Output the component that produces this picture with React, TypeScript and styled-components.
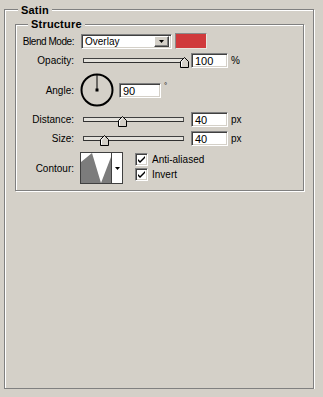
import React from "react";
import styled, { createGlobalStyle } from "styled-components";

const GlobalStyle = createGlobalStyle`
  html, body {
    margin: 0;
    background: #d4d0c8;
  }
  body {
    font-family: "Liberation Sans", Arial, sans-serif;
    font-size: 10px;
    color: #000;
  }
`;

const Group = styled.div<{ $w: number; $h: number; $mt: number; $ml: number }>`
  position: relative;
  box-sizing: border-box;
  width: ${({ $w }) => $w}px;
  height: ${({ $h }) => $h}px;
  margin: ${({ $mt }) => $mt}px 0 0 ${({ $ml }) => $ml}px;
  border: 1px solid #808080;
  box-shadow: inset 1px 1px 0 #fff, 1px 1px 0 #fff;
`;

const Frame = styled.div`
  padding-top: 9px;
  padding-left: 4px;
`;

const Structure = styled(Group)`
  padding-top: 8px;
  display: flex;
  flex-direction: column;
`;

const Title = styled.span<{ $left: number; $top: number }>`
  position: absolute;
  left: ${({ $left }) => $left}px;
  top: ${({ $top }) => $top}px;
  padding: 0 3px;
  background: #d4d0c8;
  font-weight: bold;
  font-size: 11px;
  line-height: 13px;
  letter-spacing: 0.2px;
`;

const Row = styled.div<{ $h: number; $mt: number }>`
  display: flex;
  align-items: center;
  height: ${({ $h }) => $h}px;
  margin-top: ${({ $mt }) => $mt}px;
`;

const Label = styled.span<{ $tight?: boolean }>`
  flex: none;
  width: 58px;
  margin-right: 6px;
  text-align: right;
  white-space: nowrap;
  letter-spacing: ${({ $tight }) => ($tight ? "-0.45px" : "0")};
`;

const sunken = `
  box-sizing: border-box;
  border: 1px solid;
  border-color: #808080 #fff #fff #808080;
  box-shadow: inset 1px 1px 0 #404040, inset -1px -1px 0 #d4d0c8;
  background: #fff;
`;

const Select = styled.div`
  ${sunken}
  display: flex;
  align-items: center;
  width: 91px;
  height: 15px;
  margin-left: 1px;
  padding: 2px;
`;

const SelectText = styled.span`
  flex: 1;
  padding-left: 1px;
  line-height: 11px;
`;

const DropButton = styled.div`
  box-sizing: border-box;
  display: flex;
  align-items: center;
  justify-content: center;
  width: 15px;
  height: 11px;
  background: #d4d0c8;
  border: 1px solid;
  border-color: #fff #404040 #404040 #fff;
  box-shadow: inset -1px -1px 0 #808080;
`;

const Swatch = styled.div`
  box-sizing: border-box;
  width: 32px;
  height: 16px;
  margin-left: 3px;
  background: #d03a3c;
  border: 1px solid #8a8a8a;
  border-color: #8a8a8a #e8e6e0 #e8e6e0 #8a8a8a;
`;

const Slider = styled.div`
  position: relative;
  display: flex;
  align-items: center;
  width: 108px;
  height: 15px;
`;

const Track = styled.div`
  box-sizing: border-box;
  width: 101px;
  height: 5px;
  margin-left: 3px;
  background: #e4e2dc;
  border: 1px solid #404040;
  border-bottom-color: #303030;
  border-right-color: #505050;
`;

const Thumb = styled.svg`
  position: absolute;
  top: 4px;
`;

const NumInput = styled.div<{ $w: number; $ml: number }>`
  ${sunken}
  width: ${({ $w }) => $w}px;
  height: 15px;
  margin-left: ${({ $ml }) => $ml}px;
  padding: 1px 0 0 3px;
  line-height: 12px;
  font-size: 11px;
`;

const Unit = styled.span<{ $raise?: boolean }>`
  margin-left: 3px;
  align-self: ${({ $raise }) => ($raise ? "flex-start" : "center")};
  margin-top: ${({ $raise }) => ($raise ? "8px" : "0")};
  font-size: ${({ $raise }) => ($raise ? "8px" : "10px")};
`;

const Dial = styled.svg`
  flex: none;
`;

const ContourBox = styled.div`
  box-sizing: border-box;
  display: flex;
  width: 43px;
  height: 32px;
  border: 1px solid #404040;
  background: #fff;
`;

const ContourArrow = styled.div`
  display: flex;
  align-items: center;
  justify-content: center;
  width: 10px;
  border-left: 1px solid #404040;
`;

const Checks = styled.div`
  display: flex;
  flex-direction: column;
  gap: 2px;
  align-self: flex-start;
  margin: 1px 0 0 12px;
`;

const CheckRow = styled.label`
  display: flex;
  align-items: center;
  gap: 4px;
  height: 13px;
`;

const Box = styled.span`
  ${sunken}
  display: flex;
  align-items: center;
  justify-content: center;
  width: 13px;
  height: 13px;
`;

const Arrow = () => (
  <svg width="5" height="3" viewBox="0 0 5 3">
    <polygon points="0,0 5,0 2.5,3" fill="#000" />
  </svg>
);

const Check = ({ label }: { label: string }) => (
  <CheckRow>
    <Box>
      <svg width="7" height="7" viewBox="0 0 7 7">
        <path d="M0 3 L0 5 L2 7 L7 2 L7 0 L2 5 Z" fill="#000" />
      </svg>
    </Box>
    {label}
  </CheckRow>
);

const SliderField = ({ value }: { value: number }) => (
  <Slider>
    <Track />
    <Thumb
      width="9"
      height="11"
      viewBox="0 0 9 11"
      style={{ left: Math.round(3 + value * 101 - 4.5) }}
    >
      <polygon
        points="0.5,10.5 0.5,4.5 4.5,0.5 8.5,4.5 8.5,10.5"
        fill="#d4d0c8"
        stroke="#000"
      />
      <path d="M1.5 9.5 V4.9 L4.5 1.9" stroke="#fff" fill="none" />
    </Thumb>
  </Slider>
);

export default function App() {
  return (
    <>
      <GlobalStyle />
      <Frame>
        <Group $w={310} $h={380} $mt={0} $ml={0}>
          <Title $left={13} $top={-6}>Satin</Title>
          <Structure $w={289} $h={167} $mt={14} $ml={10}>
            <Title $left={12} $top={-7}>Structure</Title>

            <Row $h={16} $mt={0}>
              <Label $tight>Blend Mode:</Label>
              <Select>
                <SelectText>Overlay</SelectText>
                <DropButton>
                  <Arrow />
                </DropButton>
              </Select>
              <Swatch />
            </Row>

            <Row $h={15} $mt={4}>
              <Label>Opacity:</Label>
              <SliderField value={1} />
              <NumInput $w={37} $ml={3}>100</NumInput>
              <Unit>%</Unit>
            </Row>

            <Row $h={34} $mt={5}>
              <Label>Angle:</Label>
              <Dial width="34" height="34" viewBox="0 0 34 34">
                <circle cx="17" cy="17" r="15.5" fill="none" stroke="#000" strokeWidth="2" />
                <line x1="17" y1="17" x2="17" y2="2" stroke="#000" strokeWidth="1" />
                <rect x="15.5" y="15.5" width="3" height="3" fill="#000" />
              </Dial>
              <NumInput $w={42} $ml={5}>90</NumInput>
              <Unit $raise>°</Unit>
            </Row>

            <Row $h={15} $mt={5}>
              <Label>Distance:</Label>
              <SliderField value={0.39} />
              <NumInput $w={37} $ml={3}>40</NumInput>
              <Unit>px</Unit>
            </Row>

            <Row $h={15} $mt={4}>
              <Label>Size:</Label>
              <SliderField value={0.21} />
              <NumInput $w={37} $ml={3}>40</NumInput>
              <Unit>px</Unit>
            </Row>

            <Row $h={32} $mt={6}>
              <Label>Contour:</Label>
              <ContourBox>
                <svg width="30" height="30" viewBox="0 0 30 30">
                  <polygon points="0,30 0,9 11,0 20,30 30,4 30,30" fill="#7c7c7c" />
                </svg>
                <ContourArrow>
                  <Arrow />
                </ContourArrow>
              </ContourBox>
              <Checks>
                <Check label="Anti-aliased" />
                <Check label="Invert" />
              </Checks>
            </Row>
          </Structure>
        </Group>
      </Frame>
    </>
  );
}
